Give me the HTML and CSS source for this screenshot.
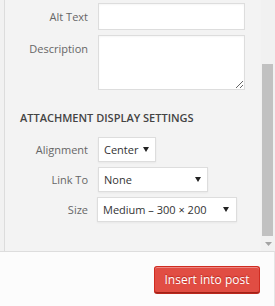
FILE: index.html
```html
<!DOCTYPE html>
<html>
<head>
<meta charset="utf-8">
<link rel="stylesheet" href="styles.css">
</head>
<body>
<div class="frame">
  <div class="main">
    <div class="gutter"></div>
    <div class="content">
      <div class="row">
        <label class="label">Alt Text</label>
        <div class="input alt"></div>
      </div>
      <div class="row">
        <label class="label desc-label">Description</label>
        <textarea class="input desc"></textarea>
      </div>
      <h2 class="heading">Attachment Display Settings</h2>
      <div class="row srow">
        <label class="label slabel">Alignment</label>
        <div class="select w-align"><span>Center</span><svg class="caret" width="6" height="5" viewBox="0 0 6 5"><path d="M0 0H6L3 5Z" fill="#222"/></svg></div>
      </div>
      <div class="row srow">
        <label class="label slabel">Link To</label>
        <div class="select w-link"><span>None</span><svg class="caret" width="6" height="5" viewBox="0 0 6 5"><path d="M0 0H6L3 5Z" fill="#222"/></svg></div>
      </div>
      <div class="row srow">
        <label class="label slabel">Size</label>
        <div class="select w-size"><span>Medium – 300 × 200</span><svg class="caret" width="6" height="5" viewBox="0 0 6 5"><path d="M0 0H6L3 5Z" fill="#222"/></svg></div>
      </div>
    </div>
    <div class="scrollbar">
      <div class="thumb-space"></div>
      <div class="thumb"></div>
      <div class="arrow"><svg width="7" height="4" viewBox="0 0 7 4"><path d="M0 0H7L3.5 4Z" fill="#a3a3a3"/></svg></div>
    </div>
  </div>
  <div class="footer">
    <button class="btn">Insert into post</button>
  </div>
</div>
</body>
</html>
```

FILE: styles.css
```css
* { box-sizing: border-box; }
html, body { margin: 0; padding: 0; }
body {
  width: 275px;
  height: 306px;
  overflow: hidden;
  font-family: "Open Sans", "Noto Sans", sans-serif;
  background: #fcfcfc;
}
.frame {
  display: flex;
  flex-direction: column;
  height: 306px;
}
.main {
  display: flex;
  height: 251px;
  flex: none;
}
.gutter {
  width: 4px;
  background: #f1f1f1;
}
.content {
  width: 257px;
  background: #f3f3f3;
  border-left: 1px solid #dcdcdc;
  padding-top: 3px;
}
.row {
  display: flex;
  align-items: flex-start;
  margin-bottom: 5px;
}
.label {
  width: 83px;
  margin-right: 10px;
  text-align: right;
  font-size: 11px;
  line-height: 15px;
  color: #666;
  padding-top: 6px;
}
.input {
  display: block;
  background: #fff;
  border: 1px solid #ddd;
  box-shadow: inset 0 1px 2px rgba(0,0,0,0.04);
  margin: 0;
  padding: 0;
  font: inherit;
}
.alt {
  width: 147px;
  height: 27px;
}
.desc {
  width: 147px;
  height: 55px;
  resize: vertical;
}
.heading {
  margin: 20px 0 0 15px;
  font-size: 11px;
  line-height: 15px;
  font-weight: 600;
  text-transform: uppercase;
  color: #444;
  height: 15px;
}
.heading + .srow { margin-top: 12px; }
.slabel { padding-top: 5px; }
.select {
  display: flex;
  align-items: center;
  justify-content: space-between;
  height: 25px;
  background: #fff;
  border: 1px solid #ddd;
  box-shadow: 0 1px 2px rgba(0,0,0,0.05);
  padding: 0 6px 0 5px;
  font-size: 11px;
  color: #333;
}
.w-align { width: 58px; }
.w-link { width: 110px; }
.w-size { width: 140px; margin-left: -1px; padding-right: 7px; }
.caret { flex: none; }
.scrollbar {
  width: 14px;
  background: #f1f1f1;
  display: flex;
  flex-direction: column;
}
.thumb-space { height: 64px; }
.thumb {
  height: 172px;
  width: 11px;
  margin-left: 1px;
  background: #c1c1c1;
}
.arrow {
  flex: 1;
  display: flex;
  align-items: center;
  justify-content: center;
}
.footer {
  flex: 1;
  border-top: 1px solid #dddddd;
  border-right: 1px solid #e5e5e5;
  background: #fcfcfc;
  display: flex;
  justify-content: flex-end;
  align-items: flex-start;
  padding: 14px 14px 0 0;
}
.btn {
  width: 106px;
  height: 27px;
  background: #e14d43;
  border: 1px solid #d02c21;
  border-bottom-color: #a02218;
  box-shadow: inset 0 1px 0 #ec8a85, 0 1px 0 #ba281e;
  border-radius: 3px;
  color: #fff;
  font-family: "Open Sans", "Noto Sans", sans-serif;
  font-size: 12px;
  padding: 0;
  text-shadow: 0 -1px 1px #ba281e;
}
```
